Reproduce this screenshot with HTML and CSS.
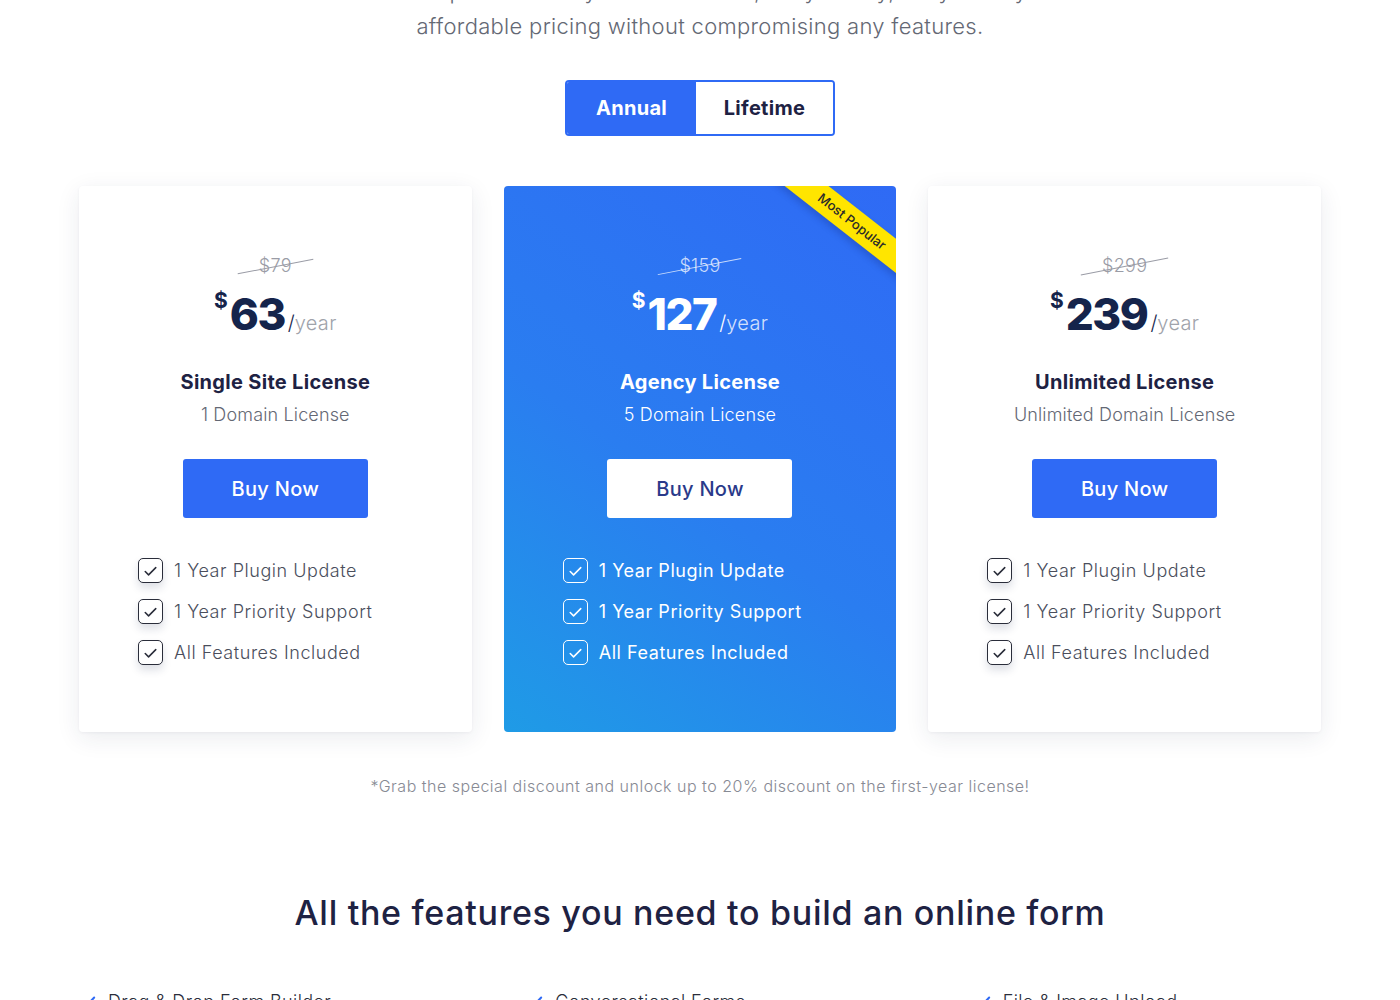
FILE: index.html
```html
<!DOCTYPE html>
<html lang="en">
<head>
<meta charset="utf-8">
<title>Pricing</title>
<link rel="stylesheet" href="styles.css">
</head>
<body>
<main class="page">
  <p class="intro">Choose the plan that fits your needs best, easy to buy, easy to stay with<br>affordable pricing without compromising any features.</p>

  <div class="toggle">
    <button class="toggle-btn active">Annual</button>
    <button class="toggle-btn">Lifetime</button>
  </div>

  <section class="plans">
    <article class="plan">
      <div class="old-price"><span>$79</span></div>
      <div class="price"><sup>$</sup><span class="amount">63</span><span class="slash">/</span><span class="per">year</span></div>
      <h3 class="plan-name">Single Site License</h3>
      <p class="plan-sub">1 Domain License</p>
      <a class="buy">Buy Now</a>
      <ul class="perks">
        <li><span class="cb"><svg viewBox="0 0 24 24"><path d="M6.5 12.5l3.5 3.5L17.5 8.5"/></svg></span>1 Year Plugin Update</li>
        <li><span class="cb"><svg viewBox="0 0 24 24"><path d="M6.5 12.5l3.5 3.5L17.5 8.5"/></svg></span>1 Year Priority Support</li>
        <li><span class="cb"><svg viewBox="0 0 24 24"><path d="M6.5 12.5l3.5 3.5L17.5 8.5"/></svg></span>All Features Included</li>
      </ul>
    </article>

    <article class="plan featured">
      <div class="ribbon">Most Popular</div>
      <div class="old-price"><span>$159</span></div>
      <div class="price"><sup>$</sup><span class="amount">127</span><span class="slash">/</span><span class="per">year</span></div>
      <h3 class="plan-name">Agency License</h3>
      <p class="plan-sub">5 Domain License</p>
      <a class="buy">Buy Now</a>
      <ul class="perks">
        <li><span class="cb"><svg viewBox="0 0 24 24"><path d="M6.5 12.5l3.5 3.5L17.5 8.5"/></svg></span>1 Year Plugin Update</li>
        <li><span class="cb"><svg viewBox="0 0 24 24"><path d="M6.5 12.5l3.5 3.5L17.5 8.5"/></svg></span>1 Year Priority Support</li>
        <li><span class="cb"><svg viewBox="0 0 24 24"><path d="M6.5 12.5l3.5 3.5L17.5 8.5"/></svg></span>All Features Included</li>
      </ul>
    </article>

    <article class="plan">
      <div class="old-price"><span>$299</span></div>
      <div class="price"><sup>$</sup><span class="amount">239</span><span class="slash">/</span><span class="per">year</span></div>
      <h3 class="plan-name">Unlimited License</h3>
      <p class="plan-sub">Unlimited Domain License</p>
      <a class="buy">Buy Now</a>
      <ul class="perks">
        <li><span class="cb"><svg viewBox="0 0 24 24"><path d="M6.5 12.5l3.5 3.5L17.5 8.5"/></svg></span>1 Year Plugin Update</li>
        <li><span class="cb"><svg viewBox="0 0 24 24"><path d="M6.5 12.5l3.5 3.5L17.5 8.5"/></svg></span>1 Year Priority Support</li>
        <li><span class="cb"><svg viewBox="0 0 24 24"><path d="M6.5 12.5l3.5 3.5L17.5 8.5"/></svg></span>All Features Included</li>
      </ul>
    </article>
  </section>

  <p class="note">*Grab the special discount and unlock up to 20% discount on the first-year license!</p>

  <h2 class="features-title">All the features you need to build an online form</h2>

  <ul class="features">
    <li><svg viewBox="0 0 16 16"><path d="M2.5 8.5l3.5 3.5L13.5 4"/></svg>Drag &amp; Drop Form Builder</li>
    <li><svg viewBox="0 0 16 16"><path d="M2.5 8.5l3.5 3.5L13.5 4"/></svg>Conversational Forms</li>
    <li><svg viewBox="0 0 16 16"><path d="M2.5 8.5l3.5 3.5L13.5 4"/></svg>File &amp; Image Upload</li>
  </ul>
</main>
</body>
</html>
```

FILE: styles.css
```css
* { box-sizing: border-box; }
html, body { margin: 0; padding: 0; background: #fff; }
body {
  font-family: "Inter", "Lato", "Noto Sans", sans-serif;
  color: #1e2243;
  overflow: hidden;
}
.page {
  width: 1242px;
  margin: 0 auto;
  text-align: center;
}
.intro {
  margin: -26px 0 0;
  font-size: 22px;
  line-height: 35px;
  color: #646874;
  font-weight: 300;
  letter-spacing: 0.3px;
}
.toggle {
  display: inline-flex;
  margin-top: 36px;
  border: 2px solid #2f6af5;
  border-radius: 4px;
  overflow: hidden;
  height: 56px;
}
.toggle-btn {
  border: 0;
  background: #fff;
  font-family: inherit;
  font-weight: 700;
  font-size: 20px;
  color: #1e2243;
  padding: 0;
  width: 137px;
  letter-spacing: 0.3px;
  cursor: pointer;
}
.toggle-btn.active {
  background: #2f6af5;
  color: #fff;
  width: 129px;
}
.plans {
  display: grid;
  grid-template-columns: repeat(3, 1fr);
  gap: 32px;
  margin-top: 50px;
}
.plan {
  position: relative;
  overflow: hidden;
  background: #fff;
  height: 546px;
  border-radius: 4px;
  padding-top: 66px;
  box-shadow: 0 6px 24px rgba(30, 40, 80, 0.09), 0 1px 3px rgba(30, 40, 80, 0.05);
}
.plan.featured {
  background: linear-gradient(35deg, #1f9be6 0%, #2a7df0 45%, #2f6af5 100%);
  color: #fff;
  box-shadow: none;
}
.old-price {
  font-size: 18px;
  line-height: 28px;
  color: #9a9ca6;
  font-weight: 300;
  letter-spacing: 0.3px;
}
.old-price span {
  position: relative;
  display: inline-block;
}
.old-price span::after {
  content: "";
  position: absolute;
  left: -22px;
  right: -22px;
  top: 50%;
  height: 1px;
  background: #9a9ca6;
  transform: rotate(-11deg);
}
.featured .old-price { color: rgba(255,255,255,0.75); }
.featured .old-price span::after { background: rgba(255,255,255,0.75); }
.price {
  margin-top: 6px;
  display: flex;
  justify-content: center;
  align-items: baseline;
  line-height: 56px;
  color: #15244b;
}
.price sup {
  font-size: 21px;
  font-weight: 700;
  align-self: flex-start;
  line-height: 30px;
  margin-right: 2px;
}
.price .amount {
  font-size: 44px;
  font-weight: 800;
  letter-spacing: -1.5px;
}
.price .slash {
  font-size: 20px;
  font-weight: 300;
  margin-left: 3px;
}
.price .per {
  font-size: 20px;
  color: #a0a3ab;
  font-weight: 300;
  letter-spacing: 0.3px;
}
.featured .price { color: #fff; }
.featured .price .per { color: rgba(255,255,255,0.8); }
.plan-name {
  margin: 16px 0 0;
  font-size: 20px;
  font-weight: 700;
  line-height: 30px;
  letter-spacing: 0.3px;
}
.plan-sub {
  margin: 4px 0 0;
  font-size: 18px;
  line-height: 28px;
  color: #646874;
  font-weight: 300;
  letter-spacing: 0.15px;
}
.featured .plan-sub { color: #fff; }
.buy {
  display: inline-flex;
  align-items: center;
  justify-content: center;
  margin-top: 30px;
  width: 185px;
  height: 59px;
  background: #2f6af5;
  color: #fff;
  font-size: 20px;
  font-weight: 500;
  border-radius: 3px;
  letter-spacing: 0.3px;
}
.featured .buy {
  background: #fff;
  color: #2a3a8a;
}
.perks {
  list-style: none;
  margin: 32px 0 0;
  padding: 0 0 0 59px;
  text-align: left;
}
.perks li {
  display: flex;
  align-items: center;
  height: 41px;
  font-size: 18px;
  color: #4a4e5c;
  font-weight: 300;
  letter-spacing: 0.55px;
}
.featured .perks li { color: #fff; font-weight: 400; }
.cb {
  flex: none;
  width: 25px;
  height: 25px;
  border: 1.5px solid #2a2d3a;
  border-radius: 5px;
  margin-right: 11px;
  background: #fff;
  box-shadow: 0 5px 8px rgba(30, 40, 80, 0.15);
  display: flex;
  align-items: center;
  justify-content: center;
}
.cb svg {
  width: 24px;
  height: 24px;
  fill: none;
  stroke: #2a2d3a;
  stroke-width: 1.6;
  stroke-linecap: round;
  stroke-linejoin: round;
}
.featured .cb {
  background: transparent;
  border-color: #fff;
  box-shadow: none;
}
.featured .cb svg { stroke: #fff; }
.ribbon {
  position: absolute;
  top: 22px;
  right: -56px;
  width: 200px;
  height: 27px;
  line-height: 27px;
  background: #ffe500;
  color: #2a2a2a;
  font-size: 13px;
  font-weight: 500;
  text-align: center;
  transform: rotate(38deg);
  box-shadow: 0 4px 6px rgba(20, 40, 120, 0.25);
}
.note {
  margin: 43px 0 0;
  font-size: 16px;
  line-height: 22px;
  color: #878a94;
  font-weight: 300;
  letter-spacing: 0.5px;
}
.features-title {
  margin: 94px 0 0;
  font-size: 34px;
  font-weight: 500;
  line-height: 44px;
  color: #1e2243;
  letter-spacing: 0.7px;
}
.features {
  list-style: none;
  margin: 56px 0 0;
  padding: 0;
  display: grid;
  grid-template-columns: repeat(3, 1fr);
  column-gap: 100px;
  text-align: left;
}
.features li {
  display: flex;
  align-items: center;
  font-size: 18px;
  color: #2a2d3a;
  font-weight: 300;
  letter-spacing: 0.4px;
}
.features svg {
  width: 18px;
  height: 18px;
  margin-right: 11px;
  fill: none;
  stroke: #2f6af5;
  stroke-width: 1.8;
  stroke-linecap: round;
}
```
